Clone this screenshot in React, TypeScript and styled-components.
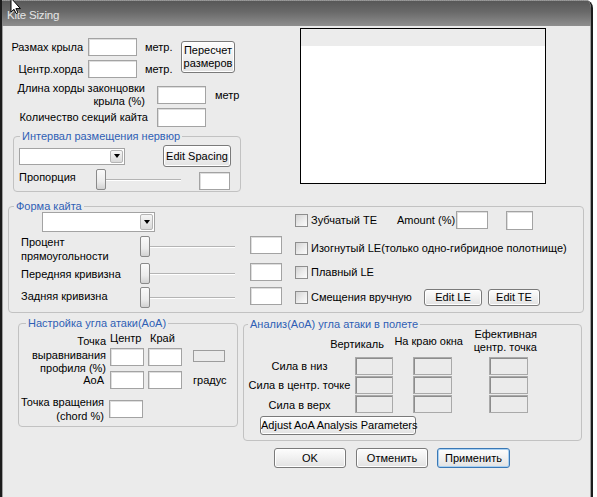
import React from "react";
import styled, { createGlobalStyle } from "styled-components";

const GlobalStyle = createGlobalStyle`
  html, body { margin: 0; padding: 0; background: #ffffff; }
  body {
    font-family: "Liberation Sans", Arial, sans-serif;
    font-size: 11px;
    color: #000;
  }
  * { box-sizing: border-box; }
`;

const Window = styled.div`
  position: relative;
  width: 593px;
  height: 497px;
  overflow: hidden;
  border-left: 2px solid #1c1c1c;
  border-right: 2px solid #1c1c1c;
  border-top-right-radius: 8px;
  display: flex;
  flex-direction: column;
  background: #ebebeb;
`;

const TitleBar = styled.div`
  height: 26px;
  flex-shrink: 0;
  display: flex;
  align-items: center;
  padding: 3px 0 0 5px;
  border-top: 1px dotted #9a9a9a;
  background: linear-gradient(to bottom, #585858 0%, #6a6a6a 45%, #8e8e8e 100%);
`;

const TitleText = styled.span`
  color: #e6e6e6;
  font-size: 11.5px;
  letter-spacing: -0.2px;
`;

const CursorLayer = styled.svg`
  position: absolute;
  left: -2px;
  top: 0;
  width: 30px;
  height: 20px;
  overflow: visible;
  pointer-events: none;
`;

const Body = styled.div`
  flex: 1;
  display: flex;
  flex-direction: column;
  border-left: 1px solid #a0a0a0;
  border-right: 1px solid #a0a0a0;
  background: #ebebeb;
`;

const TopArea = styled.div`
  display: flex;
  align-items: flex-start;
`;

const LeftColumn = styled.div`
  width: 297px;
  flex-shrink: 0;
  padding-top: 12px;
  display: flex;
  flex-direction: column;
`;

const SizeBlock = styled.div`
  display: flex;
  align-items: flex-start;
`;

const SizeRows = styled.div`
  display: flex;
  flex-direction: column;
`;

const FieldRow = styled.div<{ $mt?: number; $align?: string; $h?: number }>`
  display: flex;
  align-items: ${(p) => p.$align ?? "center"};
  margin-top: ${(p) => p.$mt ?? 0}px;
  ${(p) => (p.$h ? `height: ${p.$h}px;` : "")}
`;

const FieldLabel = styled.div<{ $w: number; $lh?: number; $mt?: number; $mb?: number; $pr?: number }>`
  width: ${(p) => p.$w}px;
  flex-shrink: 0;
  text-align: right;
  line-height: ${(p) => p.$lh ?? 13}px;
  margin-top: ${(p) => p.$mt ?? 0}px;
  margin-bottom: ${(p) => p.$mb ?? 0}px;
  padding-right: ${(p) => p.$pr ?? 0}px;
  white-space: nowrap;
`;

const PlainLabel = styled.div<{ $w: number; $lh?: number; $mt?: number }>`
  width: ${(p) => p.$w}px;
  flex-shrink: 0;
  line-height: ${(p) => p.$lh ?? 13}px;
  margin-top: ${(p) => p.$mt ?? 0}px;
  white-space: nowrap;
`;

const Unit = styled.span<{ $ml: number; $w?: number }>`
  margin-left: ${(p) => p.$ml}px;
  ${(p) => (p.$w ? `width: ${p.$w}px;` : "")}
  flex-shrink: 0;
  white-space: nowrap;
`;

const TextBox = styled.input.attrs({ readOnly: true, type: "text" })<{
  $w: number;
  $h?: number;
  $ml?: number;
  $mt?: number;
  $disabled?: boolean;
}>`
  appearance: none;
  display: block;
  flex-shrink: 0;
  width: ${(p) => p.$w}px;
  height: ${(p) => p.$h ?? 18}px;
  margin: ${(p) => p.$mt ?? 0}px 0 0 ${(p) => p.$ml ?? 0}px;
  padding: 0;
  outline: none;
  font: inherit;
  border: 1px solid ${(p) => (p.$disabled ? "#a9a9a9" : "#a3a3a3")};
  border-radius: 0;
  background: ${(p) => (p.$disabled ? "#ebebeb" : "#ffffff")};
  box-shadow: inset 1px 1px 0 ${(p) => (p.$disabled ? "#8c8c8c" : "#dedede")};
`;

const StaticBox = styled.div<{ $w: number; $h: number; $ml: number; $mt: number }>`
  width: ${(p) => p.$w}px;
  height: ${(p) => p.$h}px;
  margin: ${(p) => p.$mt}px 0 0 ${(p) => p.$ml}px;
  flex-shrink: 0;
  border: 1px solid #9c9c9c;
  background: #ebebeb;
`;

const PushButton = styled.button<{
  $w: number;
  $h: number;
  $ml?: number;
  $mt?: number;
  $focus?: boolean;
}>`
  flex-shrink: 0;
  width: ${(p) => p.$w}px;
  height: ${(p) => p.$h}px;
  margin: ${(p) => p.$mt ?? 0}px 0 0 ${(p) => p.$ml ?? 0}px;
  padding: 0;
  font: inherit;
  line-height: 13px;
  color: #000;
  white-space: nowrap;
  border: 1px solid ${(p) => (p.$focus ? "#3a78b5" : "#7a7a7a")};
  border-radius: 3px;
  background: linear-gradient(to bottom, #fdfdfd 0%, #f0f0f0 50%, #e2e2e2 100%);
  box-shadow: ${(p) => (p.$focus ? "inset 0 0 0 1px #a8d0f2" : "inset 0 0 0 1px #ffffff")};
`;

const Select = styled.div<{ $w: number; $h: number; $ml?: number }>`
  width: ${(p) => p.$w}px;
  height: ${(p) => p.$h}px;
  margin-left: ${(p) => p.$ml ?? 0}px;
  flex-shrink: 0;
  display: flex;
  justify-content: flex-end;
  padding: 1px;
  background: #fff;
  border: 1px solid #a3a3a3;
`;

const DropButton = styled.div`
  width: 13px;
  display: flex;
  align-items: center;
  justify-content: center;
  border: 1px solid #b5b5b5;
  border-radius: 2px;
  background: linear-gradient(to bottom, #f6f6f6, #d9d9d9);
  &::after {
    content: "";
    border-left: 3.5px solid transparent;
    border-right: 3.5px solid transparent;
    border-top: 4px solid #000;
  }
`;

const Slider = styled.div<{ $w: number; $mt?: number }>`
  width: ${(p) => p.$w}px;
  margin-top: ${(p) => p.$mt ?? 0}px;
  flex-shrink: 0;
  display: flex;
  align-items: center;
`;

const SliderThumb = styled.div`
  width: 10px;
  height: 21px;
  flex-shrink: 0;
  border: 1px solid #8a8a8a;
  border-radius: 2px;
  background: linear-gradient(to bottom, #fafafa 0%, #ececec 60%, #d2d2d2 100%);
`;

const SliderLine = styled.div`
  flex: 1;
  height: 2px;
  border-top: 1px solid #b4b4b4;
  border-bottom: 1px solid #ffffff;
`;

const Group = styled.fieldset<{ $w: number; $ml?: number; $mt?: number }>`
  width: ${(p) => p.$w}px;
  flex-shrink: 0;
  margin: ${(p) => p.$mt ?? 0}px 0 0 ${(p) => p.$ml ?? 0}px;
  padding: 0;
  min-width: 0;
  border: 1px solid #c2c2c2;
  border-radius: 4px;
`;

const Legend = styled.legend<{ $ml: number }>`
  margin-left: ${(p) => p.$ml}px;
  padding: 0 2px;
  line-height: 12px;
  color: #2f5fb5;
  white-space: nowrap;
`;

const GroupBody = styled.div<{ $pl?: number; $pt?: number; $pb?: number }>`
  display: flex;
  flex-direction: column;
  align-items: flex-start;
  padding: ${(p) => p.$pt ?? 0}px 0 ${(p) => p.$pb ?? 0}px ${(p) => p.$pl ?? 0}px;
`;

const Preview = styled.div`
  width: 246px;
  height: 156px;
  margin-top: 2px;
  flex-shrink: 0;
  border: 1px solid #000;
  background: #fff;
`;

const PreviewStrip = styled.div`
  height: 17px;
  background: #ececec;
`;

const ShapeBody = styled.div`
  display: flex;
  align-items: flex-start;
  padding-bottom: 4px;
`;

const ShapeLeft = styled.div`
  width: 285px;
  flex-shrink: 0;
  padding-left: 12px;
  display: flex;
  flex-direction: column;
  align-items: flex-start;
`;

const ShapeRight = styled.div`
  margin-top: -2px;
  padding-left: 1px;
  display: flex;
  flex-direction: column;
`;

const OptionRow = styled.div<{ $mt: number }>`
  height: 20px;
  margin-top: ${(p) => p.$mt}px;
  display: flex;
  align-items: center;
`;

const CheckLabel = styled.label<{ $w?: number }>`
  ${(p) => (p.$w ? `width: ${p.$w}px;` : "")}
  flex-shrink: 0;
  display: flex;
  align-items: center;
  gap: 3px;
  white-space: nowrap;
`;

const CheckBox = styled.span`
  width: 13px;
  height: 13px;
  flex-shrink: 0;
  border: 1px solid #8e8e8e;
  background: linear-gradient(135deg, #d4d4d4 0%, #ececec 55%, #fbfbfb 100%);
`;

const InlineText = styled.span<{ $w: number }>`
  width: ${(p) => p.$w}px;
  flex-shrink: 0;
  white-space: nowrap;
`;

const BottomRow = styled.div`
  display: flex;
  align-items: flex-start;
  margin-top: 4px;
  padding-left: 15px;
  gap: 5px;
`;

const AoaBlock = styled.div<{ $mt?: number }>`
  display: flex;
  align-items: flex-start;
  margin-top: ${(p) => p.$mt ?? 0}px;
`;

const AoaColumns = styled.div`
  display: flex;
  flex-direction: column;
  margin-left: 4px;
`;

const HeadRow = styled.div`
  display: flex;
  line-height: 13px;
`;

const HeadCell = styled.div<{ $w: number; $ml?: number; $pl?: number }>`
  width: ${(p) => p.$w}px;
  margin-left: ${(p) => p.$ml ?? 0}px;
  padding-left: ${(p) => p.$pl ?? 0}px;
  white-space: nowrap;
`;

const InputPair = styled.div`
  display: flex;
  gap: 4px;
  margin-top: 3px;
`;

const AnalysisHeader = styled.div`
  display: flex;
  align-items: flex-start;
  margin-top: -2px;
`;

const ColHead = styled.div<{ $w: number; $mt?: number }>`
  width: ${(p) => p.$w}px;
  margin-top: ${(p) => p.$mt ?? 0}px;
  text-align: right;
  line-height: 13px;
  white-space: nowrap;
`;

const ForceGrid = styled.div`
  display: grid;
  grid-template-columns: 111px 58px 76px 39px;
  grid-auto-rows: 18px;
  row-gap: 1px;
  margin-top: 3px;
`;

const ForceLabel = styled.div<{ $dy?: number }>`
  text-align: center;
  line-height: 18px;
  white-space: nowrap;
  transform: translateY(${(p) => p.$dy ?? 0}px);
`;

const ButtonRow = styled.div`
  display: flex;
  margin-top: 7px;
  padding-left: 271px;
`;

function TrackBar({ w, mt }: { w: number; mt?: number }) {
  return (
    <Slider $w={w} $mt={mt}>
      <SliderThumb />
      <SliderLine />
    </Slider>
  );
}

export default function App() {
  return (
    <>
      <GlobalStyle />
      <Window>
        <TitleBar>
          <TitleText>Kite Sizing</TitleText>
        </TitleBar>
        <CursorLayer viewBox="0 0 30 20">
          <path
            d="M11 -2 L11 12 L14 9.3 L16.2 13.6 L18 12.8 L15.9 8.6 L20.4 8.6 Z"
            fill="#fff"
            stroke="#000"
            strokeWidth="1"
            strokeLinejoin="miter"
          />
        </CursorLayer>
        <Body>
          <TopArea>
            <LeftColumn>
              <SizeBlock>
                <SizeRows>
                  <FieldRow>
                    <FieldLabel $w={80}>Размах крыла</FieldLabel>
                    <TextBox $w={49} $ml={5} />
                    <Unit $ml={8} $w={32}>метр.</Unit>
                  </FieldRow>
                  <FieldRow $mt={4}>
                    <FieldLabel $w={80}>Центр.хорда</FieldLabel>
                    <TextBox $w={49} $ml={5} />
                    <Unit $ml={8} $w={32}>метр.</Unit>
                  </FieldRow>
                </SizeRows>
                <PushButton $w={54} $h={32} $ml={4} $mt={3}>
                  Пересчет
                  <br />
                  размеров
                </PushButton>
              </SizeBlock>
              <FieldRow $mt={4}>
                <FieldLabel $w={142}>
                  Длина хорды законцовки
                  <br />
                  крыла (%)
                </FieldLabel>
                <TextBox $w={49} $ml={12} />
                <Unit $ml={9}>метр</Unit>
              </FieldRow>
              <FieldRow>
                <FieldLabel $w={145}>Количество секций кайта</FieldLabel>
                <TextBox $w={49} $ml={9} $h={19} />
              </FieldRow>
              <Group $w={228} $ml={10} $mt={3}>
                <Legend $ml={6}>Интервал размещения нервюр</Legend>
                <GroupBody $pl={5} $pt={3} $pb={1}>
                  <FieldRow>
                    <Select $w={106} $h={17}>
                      <DropButton />
                    </Select>
                    <PushButton $w={68} $h={22} $ml={38}>
                      Edit Spacing
                    </PushButton>
                  </FieldRow>
                  <FieldRow $mt={2} $align="flex-start">
                    <PlainLabel $w={77} $mt={2}>
                      Пропорция
                    </PlainLabel>
                    <TrackBar w={85} />
                    <TextBox $w={31} $ml={18} $mt={3} />
                  </FieldRow>
                </GroupBody>
              </Group>
            </LeftColumn>
            <Preview>
              <PreviewStrip />
            </Preview>
          </TopArea>

          <Group $w={576} $ml={5} $mt={8}>
            <Legend $ml={5}>Форма кайта</Legend>
            <ShapeBody>
              <ShapeLeft>
                <Select $w={113} $h={20} $ml={21}>
                  <DropButton />
                </Select>
                <FieldRow $mt={3} $align="flex-start">
                  <PlainLabel $w={119} $lh={14}>
                    Процент
                    <br />
                    прямоугольности
                  </PlainLabel>
                  <TrackBar w={95} mt={1} />
                  <TextBox $w={32} $ml={15} $mt={1} />
                </FieldRow>
                <FieldRow $align="flex-start">
                  <PlainLabel $w={119} $lh={14} $mt={4}>
                    Передняя кривизна
                  </PlainLabel>
                  <TrackBar w={95} />
                  <TextBox $w={32} $ml={15} />
                </FieldRow>
                <FieldRow $mt={3} $align="flex-start">
                  <PlainLabel $w={119} $lh={14} $mt={2}>
                    Задняя кривизна
                  </PlainLabel>
                  <TrackBar w={95} />
                  <TextBox $w={32} $ml={15} />
                </FieldRow>
              </ShapeLeft>
              <ShapeRight>
                <OptionRow $mt={0}>
                  <CheckLabel $w={102}>
                    <CheckBox />
                    Зубчатый TE
                  </CheckLabel>
                  <InlineText $w={59}>Amount (%)</InlineText>
                  <TextBox $w={32} />
                  <TextBox $w={27} $h={19} $ml={18} />
                </OptionRow>
                <OptionRow $mt={8}>
                  <CheckLabel>
                    <CheckBox />
                    Изогнутый LE(только одно-гибридное полотнище)
                  </CheckLabel>
                </OptionRow>
                <OptionRow $mt={4}>
                  <CheckLabel>
                    <CheckBox />
                    Плавный LE
                  </CheckLabel>
                </OptionRow>
                <OptionRow $mt={5}>
                  <CheckLabel $w={129}>
                    <CheckBox />
                    Смещения вручную
                  </CheckLabel>
                  <PushButton $w={58} $h={17}>
                    Edit LE
                  </PushButton>
                  <PushButton $w={52} $h={17} $ml={6}>
                    Edit TE
                  </PushButton>
                </OptionRow>
              </ShapeRight>
            </ShapeBody>
          </Group>

          <BottomRow>
            <Group $w={220}>
              <Legend $ml={7}>Настройка угла атаки(AoA)</Legend>
              <GroupBody $pt={3} $pb={3}>
                <AoaBlock>
                  <FieldLabel $w={87} $lh={13.5} $mt={3} $mb={-10}>
                    Точка
                    <br />
                    выравнивания
                    <br />
                    профиля (%)
                  </FieldLabel>
                  <AoaColumns>
                    <HeadRow>
                      <HeadCell $w={34}>Центр</HeadCell>
                      <HeadCell $w={34} $ml={4} $pl={2}>
                        Край
                      </HeadCell>
                    </HeadRow>
                    <InputPair>
                      <TextBox $w={34} />
                      <TextBox $w={34} />
                    </InputPair>
                  </AoaColumns>
                  <StaticBox $w={32} $h={12} $ml={11} $mt={18} />
                </AoaBlock>
                <AoaBlock $mt={5}>
                  <FieldLabel $w={87} $lh={18} $pr={2}>
                    АоА
                  </FieldLabel>
                  <TextBox $w={34} $ml={4} />
                  <TextBox $w={34} $ml={4} />
                  <Unit $ml={11}>
                    <FieldLabel $w={40} $lh={18} style={{ textAlign: "left" }}>
                      градус
                    </FieldLabel>
                  </Unit>
                </AoaBlock>
                <FieldRow $mt={6}>
                  <FieldLabel $w={85} $lh={14}>
                    Точка вращения
                    <br />
                    (chord %)
                  </FieldLabel>
                  <TextBox $w={34} $ml={5} />
                </FieldRow>
              </GroupBody>
            </Group>

            <Group $w={339} $mt={1}>
              <Legend $ml={4}>Анализ(AoA) угла атаки в полете</Legend>
              <GroupBody $pb={5}>
                <AnalysisHeader>
                  <ColHead $w={140} $mt={10}>
                    Вертикаль
                  </ColHead>
                  <ColHead $w={79} $mt={7}>
                    На краю окна
                  </ColHead>
                  <ColHead $w={74}>
                    Ефективная
                    <br />
                    центр. точка
                  </ColHead>
                </AnalysisHeader>
                <ForceGrid>
                  <ForceLabel>Сила в низ</ForceLabel>
                  <TextBox $w={38} $disabled />
                  <TextBox $w={39} $disabled />
                  <TextBox $w={39} $disabled />
                  <ForceLabel>Сила в центр. точке</ForceLabel>
                  <TextBox $w={38} $disabled />
                  <TextBox $w={39} $disabled />
                  <TextBox $w={39} $disabled />
                  <ForceLabel $dy={1}>Сила в верх</ForceLabel>
                  <TextBox $w={38} $disabled />
                  <TextBox $w={39} $disabled />
                  <TextBox $w={39} $disabled />
                </ForceGrid>
                <PushButton $w={156} $h={19} $ml={16} $mt={3}>
                  Adjust AoA Analysis Parameters
                </PushButton>
              </GroupBody>
            </Group>
          </BottomRow>

          <ButtonRow>
            <PushButton $w={72} $h={20}>
              OK
            </PushButton>
            <PushButton $w={72} $h={20} $ml={10}>
              Отменить
            </PushButton>
            <PushButton $w={73} $h={20} $ml={9} $focus>
              Применить
            </PushButton>
          </ButtonRow>
        </Body>
      </Window>
    </>
  );
}
